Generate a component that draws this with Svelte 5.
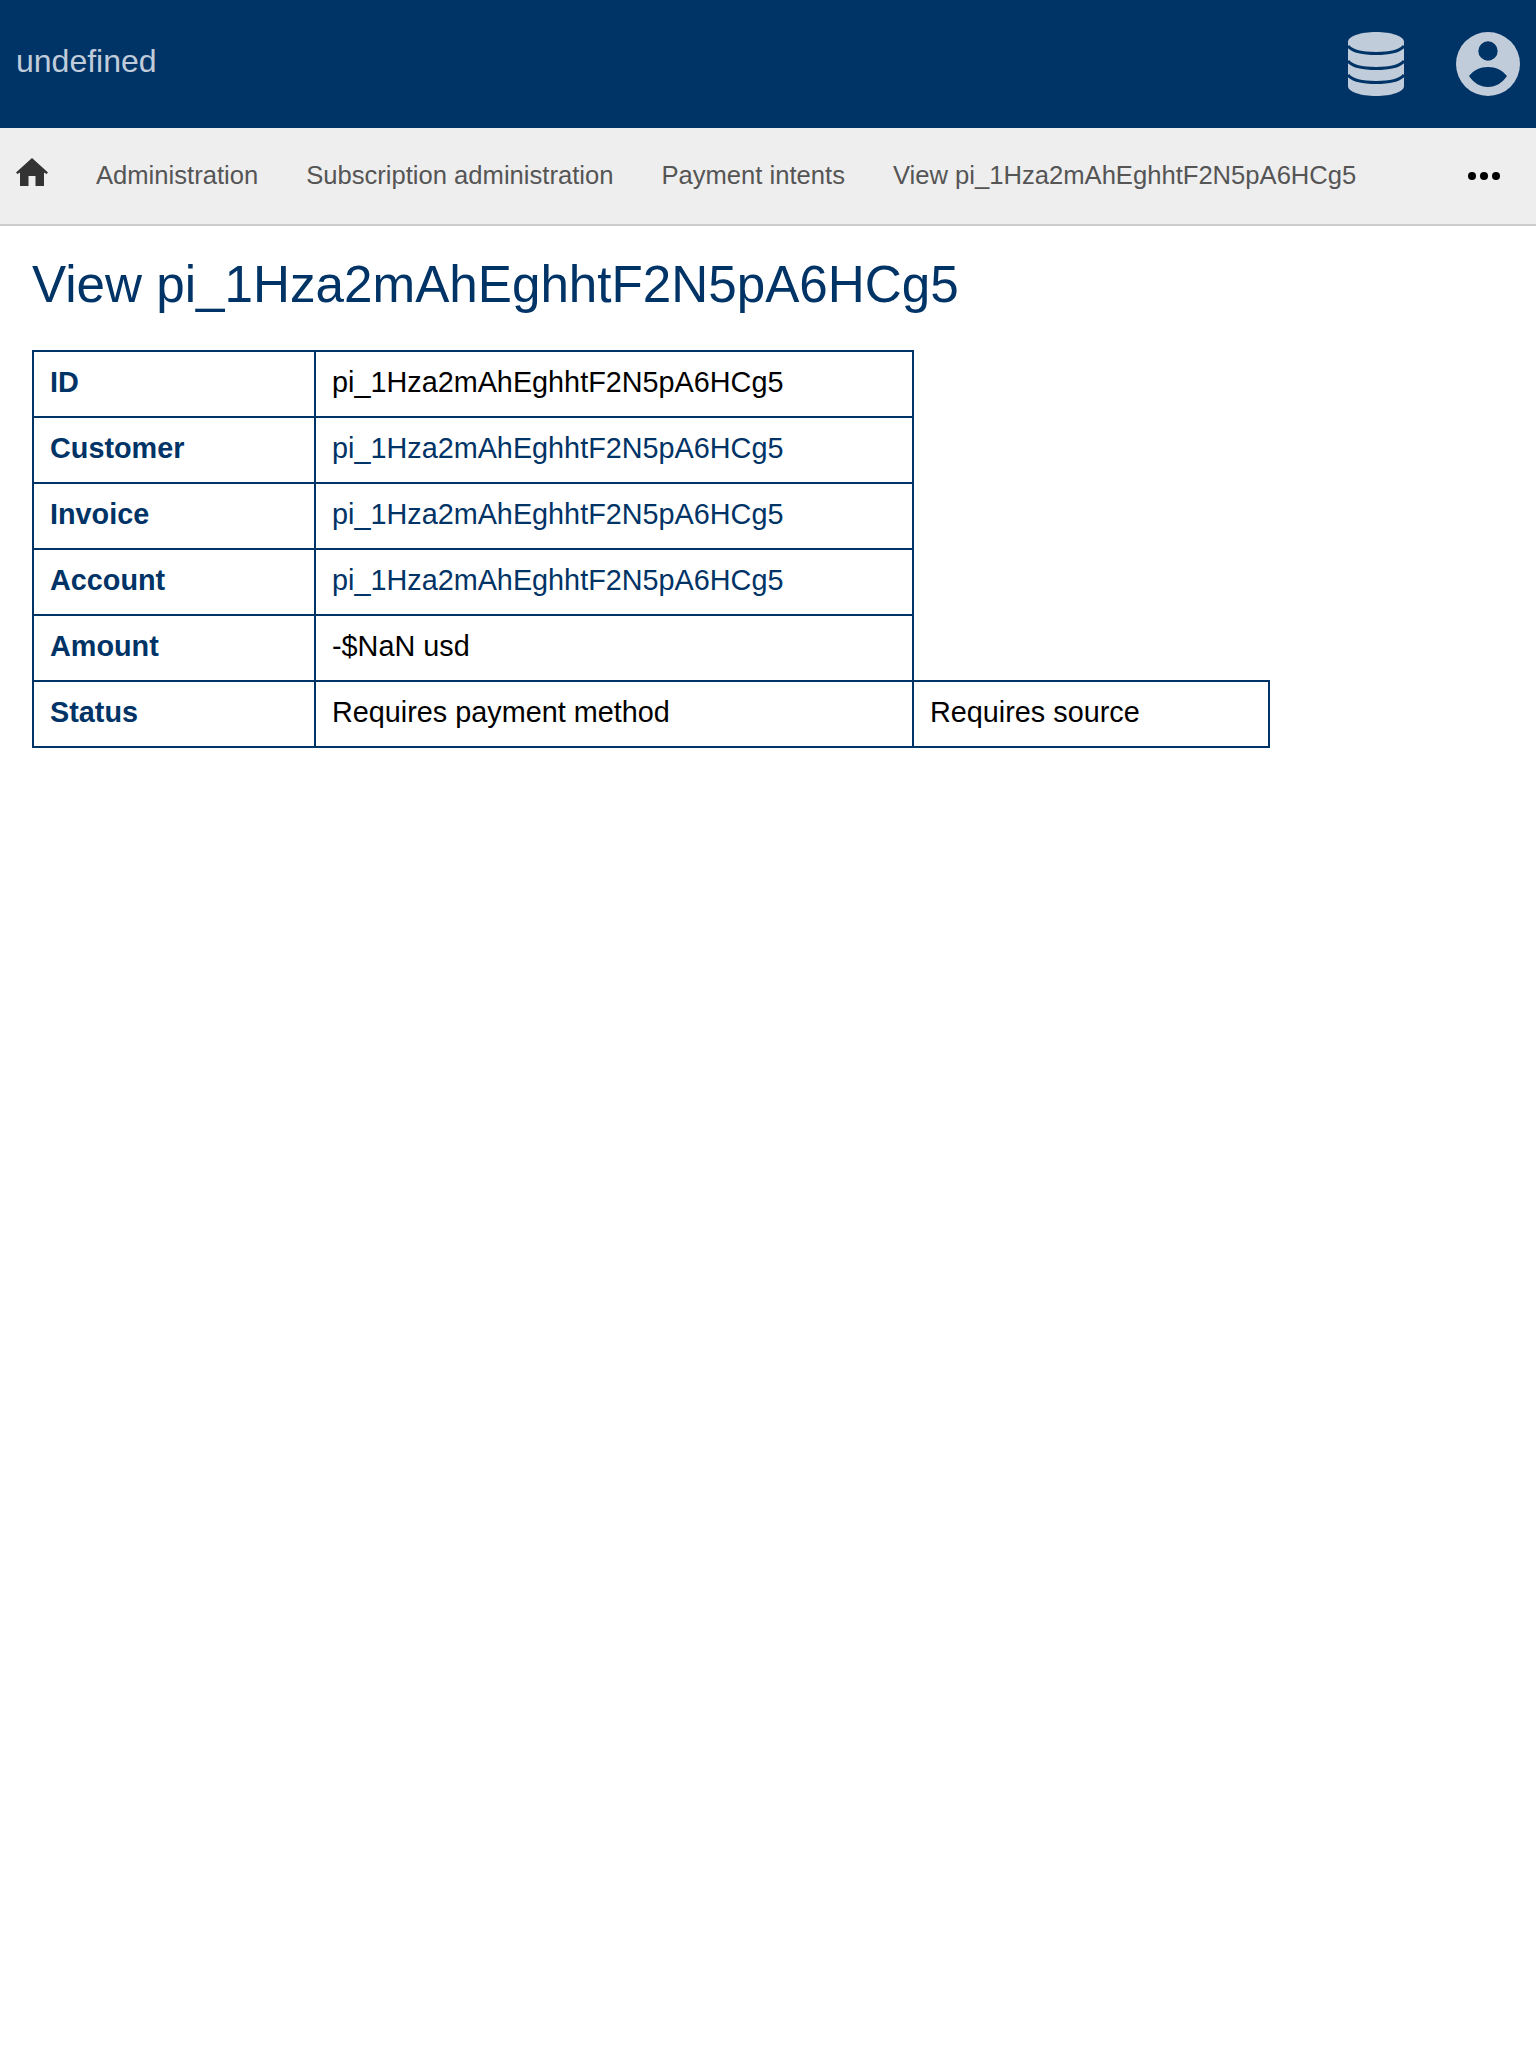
<script>
	const crumbs = ['Administration', 'Subscription administration', 'Payment intents', 'View pi_1Hza2mAhEghhtF2N5pA6HCg5'];
	const id = 'pi_1Hza2mAhEghhtF2N5pA6HCg5';
</script>

<header class="topbar">
	<span class="brand">undefined</span>
	<div class="top-icons">
		<svg class="db" viewBox="0 0 56 64" width="56" height="64">
			<path d="M0 10C0 4 13 0 28 0s28 4 28 10v44c0 6-13 10-28 10S0 60 0 54z" />
			<g class="gaps">
				<path d="M0 14c4 5 15 7.500 28 7.500S52 19 56 14" />
				<path d="M0 29c4 5 15 7.500 28 7.500S52 34 56 29" />
				<path d="M0 43c4 5 15 7.500 28 7.500S52 48 56 43" />
			</g>
		</svg>
		<svg class="user" viewBox="0 0 64 64" width="64" height="64">
			<path fill-rule="evenodd" d="M32 0a32 32 0 1 1 0 64 32 32 0 0 1 0-64zm0 9.300a9.700 9.700 0 1 0 0 19.400 9.700 9.700 0 0 0 0-19.400zM13 44c5-6 11-9 19-9s14 3 19 9c-5 7-11 11-19 11s-14-4-19-11z" />
		</svg>
	</div>
</header>

<nav class="crumbs">
	<svg class="home" viewBox="0 0 32 28" width="32" height="28">
		<path d="M16 0 0 14.500 1.500 16 4 14.500V28h8.500V18h7v10H28V14.500l2.500 1.500 1.500-1.500z" />
	</svg>
	{#each crumbs as c}
		<a href="#top">{c}</a>
	{/each}
	<span class="more"><i></i><i></i><i></i></span>
</nav>

<main>
	<h1>View {id}</h1>
	<table>
		<tbody>
			<tr><th>ID</th><td>{id}</td></tr>
			<tr><th>Customer</th><td><a href="#top">{id}</a></td></tr>
			<tr><th>Invoice</th><td><a href="#top">{id}</a></td></tr>
			<tr><th>Account</th><td><a href="#top">{id}</a></td></tr>
			<tr><th>Amount</th><td>-$NaN usd</td></tr>
			<tr><th>Status</th><td>Requires payment method</td><td class="last">Requires source</td></tr>
		</tbody>
	</table>
</main>

<style>
	:global(body) {
		font-family: "Liberation Sans", Arial, sans-serif;
		background: #fff;
	}
	.topbar {
		height: 128px;
		background: #003366;
		display: flex;
		align-items: center;
		justify-content: space-between;
		padding: 0 16px;
	}
	.brand {
		font-size: 32px;
		color: #c0ccda;
		margin-top: -6px;
	}
	.top-icons {
		display: flex;
		align-items: center;
		gap: 52px;
	}
	.top-icons svg {
		fill: #c0ccda;
		display: block;
	}
	.gaps path {
		fill: none;
		stroke: #003366;
		stroke-width: 3;
	}
	.crumbs {
		height: 96px;
		background: #eeeeee;
		border-bottom: 2px solid #cccccc;
		display: flex;
		align-items: center;
		padding: 0 16px;
		gap: 48px;
		white-space: nowrap;
	}
	.home {
		fill: #333333;
		margin-top: -8px;
	}
	.crumbs a {
		font-size: 25.6px;
		color: #555555;
		text-decoration: none;
		margin-top: -2px;
	}
	.more {
		margin-left: auto;
		margin-right: 20px;
		display: flex;
		gap: 4px;
	}
	.more i {
		width: 8px;
		height: 8px;
		border-radius: 50%;
		background: #000;
	}
	main {
		padding: 0 32px;
	}
	h1 {
		margin: 0;
		padding: 28px 0 34px;
		font-size: 51.2px;
		font-weight: 400;
		line-height: 62px;
		color: #003366;
	}
	table {
		border-collapse: collapse;
		font-size: 28.8px;
	}
	th, td {
		border: 2px solid #003366;
		padding: 14px 16px;
		height: 66px;
		box-sizing: border-box;
		text-align: left;
		vertical-align: top;
		color: #000;
	}
	th {
		width: 282px;
		color: #003366;
	}
	td {
		width: 598px;
	}
	td.last {
		width: 356px;
	}
	td a {
		color: #003366;
		text-decoration: none;
	}
</style>
